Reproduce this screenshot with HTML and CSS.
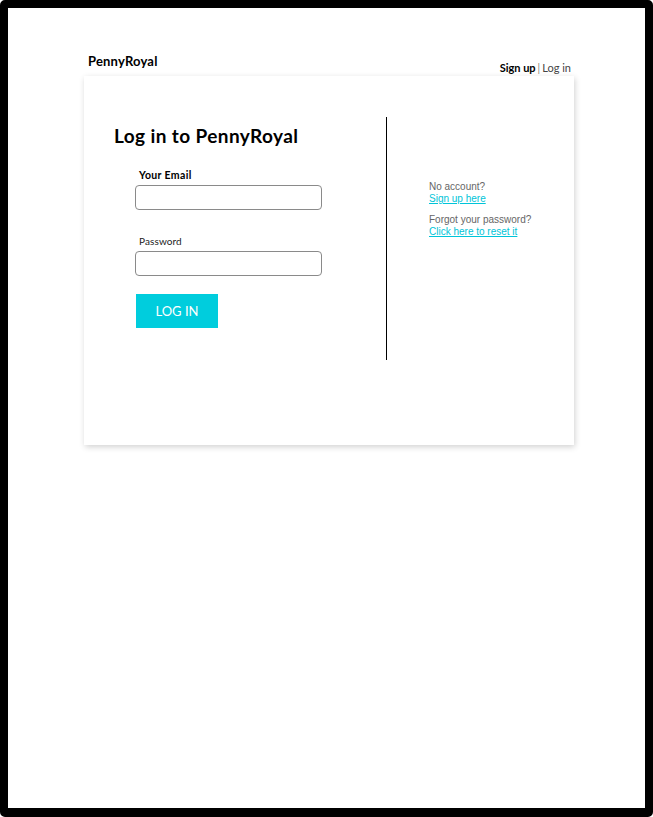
FILE: index.html
```html
<!DOCTYPE html>
<html>
<head>
<meta charset="utf-8">
<link rel="stylesheet" href="styles.css">
</head>
<body>
<div class="frame">
  <div class="wrap">
    <header class="top">
      <div class="brand">PennyRoyal</div>
      <nav class="nav"><a class="nav-strong">Sign up</a><span class="sep">|</span><a class="nav-light">Log in</a></nav>
    </header>
    <main class="card">
      <section class="left">
        <h1 class="title">Log in to PennyRoyal</h1>
        <form class="form">
          <label class="label label-bold">Your Email</label>
          <input class="field" type="text">
          <label class="label label-pw">Password</label>
          <input class="field" type="password">
          <button class="btn" type="button">LOG IN</button>
        </form>
      </section>
      <div class="divider"></div>
      <aside class="right">
        <p class="hint">No account?<br><a class="link">Sign up here</a></p>
        <p class="hint">Forgot your password?<br><a class="link">Click here to reset it</a></p>
      </aside>
    </main>
  </div>
</div>
</body>
</html>
```
FILE: styles.css
```css
html, body { margin: 0; padding: 0; background: #fff; }
.frame {
  box-sizing: border-box;
  width: 653px;
  height: 817px;
  border: 8px solid #000;
  border-bottom-width: 9px;
  border-radius: 5px;
  padding: 44px 0 0 76px;
  font-family: Lato, "Open Sans", sans-serif;
}
.wrap { width: 490px; }
.top {
  display: flex;
  justify-content: space-between;
  align-items: flex-end;
  padding: 0 3px 0 4px;
  height: 24px;
}
.brand { font-weight: 700; font-size: 13px; line-height: 16px; padding-bottom: 7px; color: #000; letter-spacing: 0.2px; }
.nav { font-size: 11px; line-height: 14px; padding-bottom: 1px; color: #000; }
.nav-strong { font-weight: 700; }
.sep { margin: 0 2px; font-weight: 300; }
.nav-light { color: #444; }
.card {
  height: 369px;
  box-sizing: border-box;
  background: #fff;
  box-shadow: 1px 2px 6px rgba(0,0,0,0.18);
  display: flex;
  align-items: flex-start;
  padding-top: 41px;
}
.left { width: 302px; box-sizing: border-box; padding: 7px 0 0 30px; }
.title { margin: 0; font-size: 19px; line-height: 24px; font-weight: 700; color: #000; letter-spacing: 0.4px; }
.form { display: flex; flex-direction: column; align-items: flex-start; padding-left: 21px; margin-top: 21px; }
.label { font-size: 10px; line-height: 12px; margin-left: 4px; color: #000; }
.label-bold { font-weight: 700; font-size: 10.5px; letter-spacing: 0.35px; }
.label-pw { margin-top: 25px; color: #222; letter-spacing: 0.1px; }
.field {
  box-sizing: border-box;
  width: 187px;
  height: 25px;
  margin-top: 4px;
  border: 1px solid #8a8a8a;
  border-radius: 4px;
  background: #fff;
  padding: 0 6px;
}
.btn {
  margin-top: 18px;
  margin-left: 1px;
  width: 82px;
  height: 34px;
  border: none;
  background: #00cddd;
  color: #fff;
  font-family: Lato, sans-serif;
  font-size: 13px;
  padding: 0;
}
.divider { width: 1px; height: 243px; background: #000; }
.right { padding: 64px 0 0 42px; font-family: "Liberation Sans", Arial, sans-serif; }
.hint { margin: 0 0 9px; font-size: 10px; line-height: 12px; color: #666; }
.link { color: #00c4d8; text-decoration: underline; }
```
